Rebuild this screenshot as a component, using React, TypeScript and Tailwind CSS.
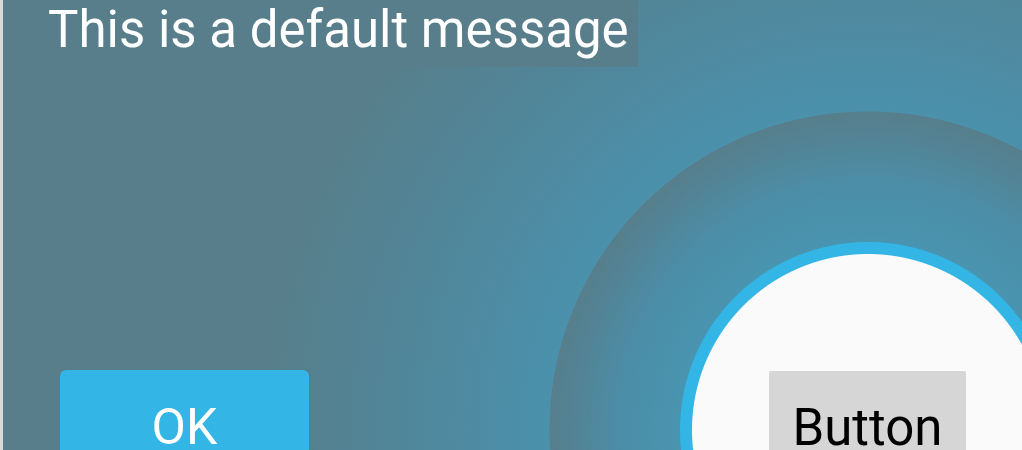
export default function App() {
  return (
    <div className="flex w-[1022px] h-[450px] overflow-hidden font-['Roboto','Noto_Sans',sans-serif]">
      <div className="w-[3px] shrink-0 bg-[#dadada]" />
      <div className="flex-1 flex flex-col bg-[#577e8a] bg-[radial-gradient(circle_at_865px_430px,#fafafa_175.5px,#33b5e5_176.5px,#33b5e5_187.5px,#4994b0_188.5px,#4c8da6_250px,#577e8b_318px,#4b91ac_319px,#4f899f_420px,#577e8a_600px)]">
        <div className="w-[635px] h-[67px] bg-[#577e8a] shrink-0">
          <div className="pl-[45px] pt-[4px] text-[51px] leading-[51px] text-white whitespace-nowrap">
            This is a default message
          </div>
        </div>
        <div className="flex items-start mt-[303px]">
          <div className="ml-[57px] w-[249px] h-[110px] rounded-[6px] bg-[#33b5e5] flex justify-center pt-[32px] text-[50px] leading-[50px] text-white shrink-0">
            OK
          </div>
          <div className="ml-[460px] mt-[1px] w-[197px] h-[110px] rounded-[2px] bg-[#d6d6d6] flex justify-center pt-[31px] text-[51px] leading-[51px] text-black shrink-0">
            Button
          </div>
        </div>
      </div>
    </div>
  );
}
